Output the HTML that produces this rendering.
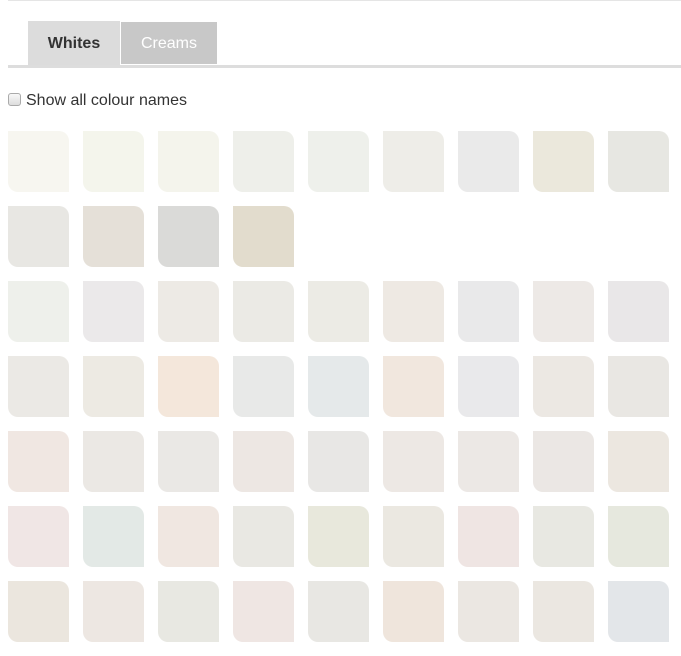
<!DOCTYPE html>
<html><head><meta charset="utf-8"><style>
body{margin:0;background:#fff;width:681px;height:656px;overflow:hidden;font-family:"Liberation Sans",Arial,sans-serif;position:relative}
.top{position:absolute;left:8px;right:0;top:0;height:1px;background:#e5e5e5}
.tab{position:absolute;font-size:16px;text-align:center}
.w{left:28px;top:21px;width:92px;height:44px;line-height:46px;background:#dcdcdc;color:#333;font-weight:bold}
.c{left:121px;top:22px;width:96px;height:42px;line-height:43px;background:#c8c8c8;color:#fff}
.ul{position:absolute;left:8px;right:0;top:65px;height:3px;background:#dddddd}
.chk{position:absolute;left:8px;top:93px;width:13px;height:13px;border:1px solid #aaa;border-radius:3px;background:linear-gradient(#f8f8f8,#ddd);box-sizing:border-box}
.lbl{position:absolute;left:26px;top:92px;font-size:16px;color:#333}
.s{position:absolute;width:61px;height:61px;border-radius:0 10px 0 10px}
</style></head><body>
<div class="top"></div>
<div class="tab w">Whites</div><div class="tab c">Creams</div>
<div class="ul"></div>
<div class="chk"></div><div class="lbl">Show all colour names</div>
<div id="g"></div>
<script>
var rows=[
["#f7f6f0","#f4f5ec","#f4f4ec","#eeefea","#eef0eb","#eeede8","#eaeaea","#ebe8dc","#e7e7e2"],
["#e8e7e3","#e5e0d8","#dadad8","#e2dccd"],
["#eef0eb","#ebe9ea","#edeae5","#ebeae5","#ecebe5","#eee9e3","#e9e9ea","#ede9e6","#e9e7e8"],
["#ebe9e5","#edeae3","#f4e7db","#e8e9e8","#e5e9ea","#f1e7de","#e9e9eb","#ece8e3","#e9e7e3"],
["#f0e7e2","#ebe8e4","#eae8e5","#ede7e3","#e8e7e5","#ede8e4","#ece8e5","#ebe7e4","#ece7e0"],
["#f0e6e5","#e3e9e6","#f0e7e1","#e9e8e3","#e8e8dc","#ebe8e1","#efe5e3","#e8e8e2","#e6e8de"],
["#ebe6de","#ede7e2","#e8e8e2","#efe6e3","#e8e7e3","#efe5dc","#ebe7e2","#ebe7e1","#e3e6e9"]];
var h="";rows.forEach(function(r,i){r.forEach(function(c,j){h+='<div class="s" style="left:'+(8+75*j)+'px;top:'+(131+75*i)+'px;background:'+c+'"></div>'})});
document.getElementById("g").innerHTML=h;
</script>
</body></html>
